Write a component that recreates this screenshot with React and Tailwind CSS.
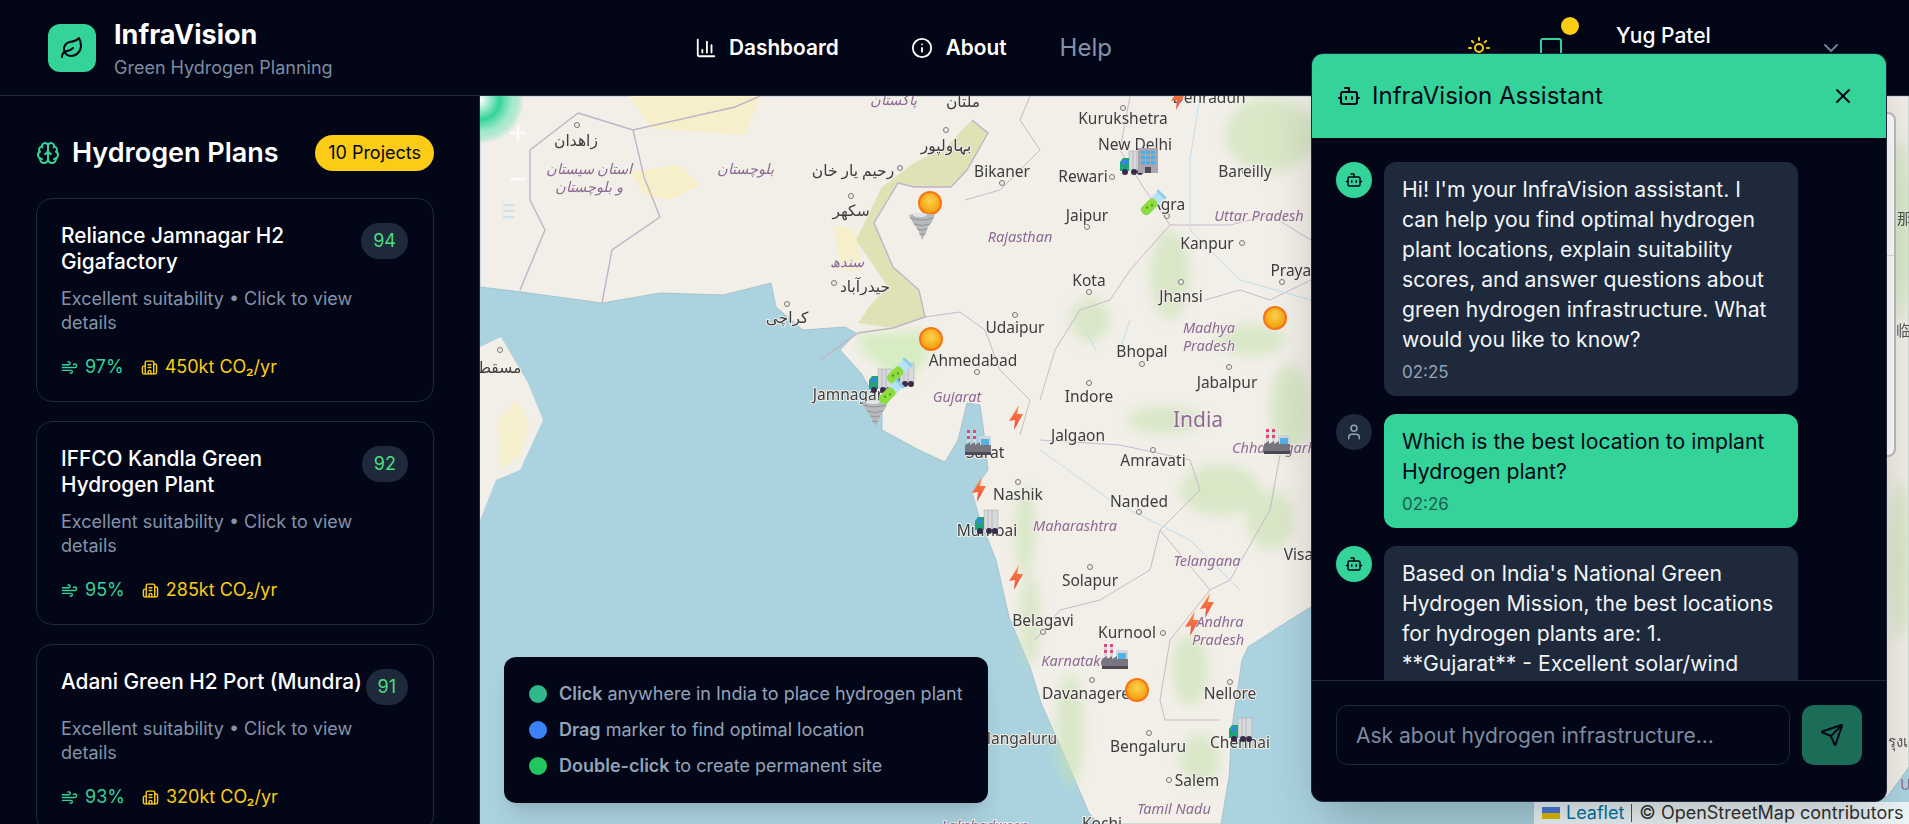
import {
  Bot,
  Brain,
  Building2,
  ChartColumn,
  ChevronDown,
  Info,
  Leaf,
  MessageSquare,
  Send,
  Sun,
  User,
  Wind,
  X,
} from "lucide-react";

const PLANS = [
  { name: "Reliance Jamnagar H2 Gigafactory", score: 94, wind: "97%", co2: "450kt" },
  { name: "IFFCO Kandla Green Hydrogen Plant", score: 92, wind: "95%", co2: "285kt" },
  { name: "Adani Green H2 Port (Mundra)", score: 91, wind: "93%", co2: "320kt" },
];

// [text, x, y] in page coordinates, the svg viewBox starts at the map's corner
const CITY_LABELS = [
  ["Kurukshetra", 1123, 119], ["New Delhi", 1135, 145], ["Bareilly", 1245, 172], ["Bikaner", 1002, 172],
  ["Rewari", 1083, 177], ["Agra", 1168, 205], ["Jaipur", 1087, 216], ["Kanpur", 1207, 244],
  ["Prayagraj", 1305, 271], ["Kota", 1089, 281], ["Jhansi", 1181, 297], ["Udaipur", 1015, 328],
  ["Ahmedabad", 973, 361], ["Bhopal", 1142, 352], ["Jabalpur", 1227, 383], ["Indore", 1089, 397],
  ["Jamnagar", 848, 395], ["Jalgaon", 1078, 436], ["Surat", 985, 453], ["Amravati", 1153, 461],
  ["Nashik", 1018, 495], ["Nanded", 1139, 502], ["Mumbai", 987, 531], ["Visakhapatnam", 1340, 555],
  ["Solapur", 1090, 581], ["Belagavi", 1043, 621], ["Kurnool", 1127, 633], ["Davanagere", 1086, 694],
  ["Nellore", 1230, 694], ["Mangaluru", 1017, 739], ["Chennai", 1240, 743], ["Bengaluru", 1148, 747],
  ["Salem", 1197, 781], ["Kochi", 1102, 824], ["Dehradun", 1209, 98], ["ملتان", 963, 102],
  ["زاهدان", 576, 141], ["رحيم يار خان", 853, 171], ["بہاولپور", 946, 146], ["سکھر", 851, 211],
  ["حيدرآباد", 865, 287], ["كراچی", 787, 318], ["مسقط", 499, 368],
];

const REGION_LABELS = [
  ["Uttar Pradesh", 1259, 216], ["Rajasthan", 1020, 237], ["Madhya", 1209, 328], ["Pradesh", 1209, 346],
  ["Gujarat", 957, 397], ["Chhattisgarh", 1274, 448], ["Maharashtra", 1075, 526], ["Telangana", 1207, 561],
  ["Andhra", 1220, 622], ["Pradesh", 1218, 640], ["Karnataka", 1075, 661], ["Tamil Nadu", 1174, 809],
  ["Lakshadweep", 985, 826], ["پاکستان", 893, 100], ["استان سیستان", 589, 169], ["و بلوچستان", 589, 187],
  ["بلوچستان", 745, 169], ["سندھ", 847, 262],
];

const TOWN_DOTS = [
  [1123, 108], [1245, 172], [1002, 183], [1112, 177], [1167, 216], [1087, 227], [1242, 243], [1282, 282],
  [1089, 292], [1181, 282], [1015, 315], [977, 372], [1142, 364], [1229, 367], [1089, 383], [1153, 450],
  [1018, 482], [1139, 512], [1090, 567], [1043, 632], [1163, 633], [1092, 680], [1230, 682], [1149, 733],
  [1054, 739], [1169, 780], [577, 125], [900, 168], [946, 130], [851, 196], [834, 283], [787, 304], [500, 350],
];

const SUNS = [[930, 203], [931, 339], [1275, 318], [1137, 690]];
const BOLTS = [[1016, 417], [979, 489], [1016, 577], [1207, 605], [1192, 623], [1178, 97]];
const TORNADOS = [[922, 226], [875, 413]];
const FACTORIES = [[978, 443], [1277, 442], [1115, 657]];
const TRUCKS = [[1132, 163], [881, 381], [903, 375], [987, 522], [1241, 730]];
const TUBES = [[1152, 204], [898, 372], [890, 393]];

const SunMarker = ({ x, y }) => (
  <g transform={`translate(${x} ${y})`}>
    <circle r="12" fill="#f97316" />
    <circle r="10" fill="url(#sunFill)" />
  </g>
);

const BoltMarker = ({ x, y }) => (
  <path
    transform={`translate(${x} ${y})`}
    d="M3 -12 L-7 4 L-1 3 L-2 13 L7 -3 L1 -3 Z"
    fill="url(#boltFill)"
  />
);

const TornadoMarker = ({ x, y }) => (
  <g transform={`translate(${x} ${y})`}>
    <path d="M-13 -11 Q0 -15 13 -11 L10 -4 L6 1 L4 7 L0 14 L-2 8 L-5 2 L-9 -3 Z" fill="#b7babd" />
    <path d="M-12 -8 Q0 -4 11 -8 M-8 -2 Q0 1 8 -2 M-5 3 Q0 5 5 3 M-3 8 Q0 9 3 8" fill="none" stroke="#8e9296" strokeWidth="1" />
    <ellipse cx="-2" cy="-11" rx="7" ry="2" fill="#e3e4e5" />
  </g>
);

const FactoryMarker = ({ x, y }) => (
  <g transform={`translate(${x} ${y})`}>
    <path d="M-11 -13 h3 v15 h-3 Z M-5 -13 h3 v15 h-3 Z" fill="#d8d8dc" />
    <path d="M-11 -13 h3 v3 h-3 Z M-5 -13 h3 v3 h-3 Z M-11 -7 h3 v3 h-3 Z M-5 -7 h3 v3 h-3 Z" fill="#e0457b" />
    <rect x="1" y="-7" width="12" height="14" rx="1" fill="#d2d6dc" />
    <rect x="3" y="-4" width="8" height="8" fill="#4fb3e8" />
    <path d="M-13 12 V2 L-8 -1 V2 L-3 -1 V2 L2 -1 V2 L13 2 V12 Z" fill="#77757f" />
    <rect x="-13" y="9" width="26" height="3" fill="#4d4a55" />
  </g>
);

const TruckMarker = ({ x, y }) => (
  <g transform={`translate(${x} ${y})`}>
    <rect x="-3" y="-12" width="14" height="19" fill="#d7d9dc" stroke="#a3a7ab" strokeWidth="0.5" />
    <path d="M1 -12 V7 M5 -12 V7" stroke="#b6b9bd" strokeWidth="1" />
    <path d="M-12 8 V-1 L-9 -5 H-3 V8 Z" fill="#1fa37a" />
    <rect x="-10" y="-3" width="5" height="4" fill="#3b82f6" />
    <circle cx="-7" cy="9" r="3" fill="#3a2a4a" />
    <circle cx="2" cy="9" r="3" fill="#3a2a4a" />
    <circle cx="8" cy="9" r="3" fill="#3a2a4a" />
  </g>
);

const TubeMarker = ({ x, y }) => (
  <g transform={`translate(${x} ${y}) rotate(45)`}>
    <rect x="-5" y="-14" width="10" height="27" rx="4" fill="#b8e2f6" />
    <rect x="-6" y="-15" width="12" height="3" fill="#8fcdea" />
    <rect x="-5" y="-5" width="10" height="18" rx="4" fill="#8fdc3e" />
    <circle cx="1" cy="1" r="1.2" fill="#4d9a22" />
    <circle cx="-1" cy="6" r="1.2" fill="#4d9a22" />
  </g>
);

const BuildingMarker = ({ x, y }) => (
  <g transform={`translate(${x} ${y})`}>
    <rect x="-10" y="-13" width="20" height="25" fill="#a9a6b0" />
    <path
      d="M-7 -10 h4 v3 h-4 Z M-2 -10 h4 v3 h-4 Z M3 -10 h4 v3 h-4 Z M-7 -5 h4 v3 h-4 Z M-2 -5 h4 v3 h-4 Z M3 -5 h4 v3 h-4 Z M-7 0 h4 v3 h-4 Z M-2 0 h4 v3 h-4 Z M3 0 h4 v3 h-4 Z"
      fill="#3fb2ee"
    />
    <rect x="-3" y="6" width="6" height="6" fill="#4a4a55" />
  </g>
);

const MapCanvas = () => (
  <svg viewBox="480 96 1429 728" className="h-full w-full" preserveAspectRatio="none">
    <defs>
      <radialGradient id="sunFill" cx="50%" cy="40%" r="60%">
        <stop offset="0%" stopColor="#fcd34d" />
        <stop offset="100%" stopColor="#f59e0b" />
      </radialGradient>
      <linearGradient id="boltFill" x1="0" y1="0" x2="0" y2="1">
        <stop offset="0%" stopColor="#fb923c" />
        <stop offset="100%" stopColor="#ef4444" />
      </linearGradient>
      <radialGradient id="pulseFill">
        <stop offset="0%" stopColor="#ffffff" />
        <stop offset="45%" stopColor="#34d399" />
        <stop offset="75%" stopColor="#86e8c0" stopOpacity="0.7" />
        <stop offset="100%" stopColor="#34d399" stopOpacity="0" />
      </radialGradient>
      <filter id="soft" x="-30%" y="-30%" width="160%" height="160%">
        <feGaussianBlur stdDeviation="6" />
      </filter>
      <filter id="softer" x="-10%" y="-10%" width="120%" height="120%">
        <feGaussianBlur stdDeviation="0.5" />
      </filter>
    </defs>

    <rect x="480" y="96" width="1429" height="728" fill="#aad3df" />

    {/* Oman */}
    <path d="M480 347 L501 337 L528 383 L543 420 L520 470 L496 480 L480 520 Z" fill="#f2efe9" />
    <path d="M498 420 L516 400 L530 425 L520 455 L500 470 Z" fill="#f7f0cf" />

    {/* Mainland */}
    <path
      d="M480 96 L480 287 L522 292 L602 303 L660 293 L723 295 L771 283 L776 307 L803 330 L845 327 L856 333 L840 350
         L861 373 L882 410 L882 430 L919 450 L945 462 L958 440 L967 403 L980 405 L985 440 L988 470 L972 492
         L980 520 L996 560 L1009 617 L1030 667 L1041 703 L1062 750 L1089 813 L1099 824 L1221 824 L1229 777 L1232 727
         L1242 660 L1248 647 L1290 620 L1311 607 L1600 690 L1887 797 L1909 767 L1909 96 Z"
      fill="#f2efe9"
      stroke="#9fbcc8"
      strokeWidth="0.8"
    />

    {/* Forest and farm patches */}
    <g filter="url(#soft)" fill="#c9e2b2" opacity="0.6">
      <ellipse cx="1270" cy="135" rx="45" ry="38" />
      <ellipse cx="1170" cy="275" rx="20" ry="45" />
      <ellipse cx="1090" cy="320" rx="20" ry="22" />
      <ellipse cx="1250" cy="340" rx="34" ry="16" />
      <ellipse cx="1290" cy="410" rx="20" ry="46" />
      <ellipse cx="1165" cy="420" rx="38" ry="14" />
      <ellipse cx="1220" cy="490" rx="40" ry="26" />
      <ellipse cx="1270" cy="520" rx="24" ry="30" />
      <ellipse cx="1025" cy="530" rx="10" ry="46" />
      <ellipse cx="1030" cy="620" rx="10" ry="46" />
      <ellipse cx="1070" cy="730" rx="14" ry="56" />
      <ellipse cx="1190" cy="670" rx="18" ry="36" />
      <ellipse cx="1200" cy="760" rx="20" ry="26" />
      <ellipse cx="1900" cy="230" rx="12" ry="90" />
      <ellipse cx="1900" cy="560" rx="10" ry="80" />
    </g>
    <path d="M858 335 L925 330 L930 355 L905 385 L880 365 L860 350 Z" fill="#d6ecc2" filter="url(#soft)" />

    {/* Desert belts */}
    <path
      d="M972 120 L988 133 L967 170 L951 187 L914 187 L898 183 L874 223 L893 267 L919 290 L925 317 L893 328 L858 323
         L872 303 L888 287 L856 240 L882 187 L914 163 L946 147 Z"
      fill="#dfe2b5"
    />
    <path d="M630 172 L680 165 L700 185 L670 200 L645 195 Z M630 96 L760 96 L745 135 L650 128 Z" fill="#f7efc9" />
    <path d="M835 225 L855 230 L862 270 L840 270 Z" fill="#f7efc9" />

    {/* Borders */}
    <g fill="none" stroke="#c2b3c6" strokeWidth="1.4">
      <path d="M578 113 L633 130 L735 107 L760 96" />
      <path d="M578 113 L530 150 L530 200 L545 230 L520 290" />
      <path d="M633 130 L644 177 L660 217 L612 250 L602 303" />
      <path d="M972 120 L988 133 L967 170 L951 187 L914 187 L898 183 L874 223 L893 267 L919 290 L925 317 L893 328 L858 333 L820 360" />
      <path d="M925 317 L960 312 L985 330 L1000 370 L1030 400 L1020 435" strokeWidth="0.9" />
      <path d="M1030 96 L1020 120 L1040 150 L1000 190 L965 200" strokeWidth="0.9" />
      <path d="M1130 96 L1120 150 L1145 190 L1170 225 L1230 225 L1270 215 L1311 240" strokeWidth="0.9" />
      <path d="M1170 225 L1130 270 L1110 300 L1080 310 L1055 350 L1040 400" strokeWidth="0.9" />
      <path d="M1205 300 L1240 290 L1270 300 L1311 280" strokeWidth="0.9" />
      <path d="M1040 440 L1120 445 L1190 460 L1200 490 L1160 530 L1150 570 L1100 600 L1060 610 L1035 640" strokeWidth="0.9" />
      <path d="M1160 530 L1210 590 L1170 640 L1160 700 L1165 720 L1220 720" strokeWidth="0.9" />
      <path d="M1280 455 L1270 510 L1230 580 L1210 590" strokeWidth="0.9" />
    </g>
    <g fill="none" stroke="#c3deea" strokeWidth="1">
      <path d="M1200 96 L1190 160 L1190 230 L1240 280 L1311 300" />
      <path d="M1040 450 L1110 500 L1190 540 L1240 590" />
      <path d="M1130 320 L1120 350 M1085 330 L1096 350" />
      <path d="M503 205 H515 M503 211 H515 M503 217 H515" strokeWidth="1.5" />
    </g>

    {/* Town dots */}
    <g fill="#f2efe9" stroke="#777" strokeWidth="1">
      {TOWN_DOTS.map(([x, y]) => (
        <circle key={`${x}-${y}`} cx={x} cy={y} r="2.5" />
      ))}
    </g>

    {/* Labels */}
    <g
      fontFamily="'Noto Sans', 'DejaVu Sans', sans-serif"
      fontSize="15.5"
      textAnchor="middle"
      fill="#3d3d3d"
      stroke="#f2efe9"
      strokeWidth="2"
      paintOrder="stroke"
      filter="url(#softer)"
    >
      {CITY_LABELS.map(([label, x, y]) => (
        <text key={label} x={x} y={y + 5}>
          {label}
        </text>
      ))}
    </g>
    <g
      fontFamily="'Noto Sans', 'DejaVu Sans', sans-serif"
      fontSize="14.5"
      fontStyle="italic"
      textAnchor="middle"
      fill="#8d6a92"
      stroke="#f2efe9"
      strokeWidth="2"
      paintOrder="stroke"
      filter="url(#softer)"
    >
      {REGION_LABELS.map(([label, x, y]) => (
        <text key={`${label}-${x}`} x={x} y={y + 5}>
          {label}
        </text>
      ))}
      <text x="1198" y="427" fontSize="21" fontStyle="normal">
        India
      </text>
    </g>
    <g fontFamily="'Noto Sans CJK SC', sans-serif" fontSize="15" fill="#555" filter="url(#softer)">
      <text x="1897" y="224">那</text>
      <text x="1896" y="336">临</text>
      <text x="1888" y="747">รุงเ</text>
      <text x="1900" y="790" fill="#8d6a92">U</text>
    </g>

    {/* Site markers */}
    {SUNS.map(([x, y]) => <SunMarker key={`${x}-${y}`} x={x} y={y} />)}
    {BOLTS.map(([x, y]) => <BoltMarker key={`${x}-${y}`} x={x} y={y} />)}
    {TORNADOS.map(([x, y]) => <TornadoMarker key={`${x}-${y}`} x={x} y={y} />)}
    {FACTORIES.map(([x, y]) => <FactoryMarker key={`${x}-${y}`} x={x} y={y} />)}
    {TRUCKS.map(([x, y]) => <TruckMarker key={`${x}-${y}`} x={x} y={y} />)}
    {TUBES.map(([x, y]) => <TubeMarker key={`${x}-${y}`} x={x} y={y} />)}
    <BuildingMarker x={1148} y={161} />

    {/* Drag pulse and the washed out zoom buttons */}
    <circle cx="480" cy="100" r="44" fill="url(#pulseFill)" />
    <path d="M510 133 H526 M518 125 V141 M510 179 H526" stroke="#ffffff" strokeWidth="2.5" opacity="0.85" />
  </svg>
);

const PlanCard = ({ plan }) => (
  <div className="rounded-2xl border border-[#1e293b] pl-[24px] pr-[25px] pt-[24px] pb-[22px]">
    <div className="flex items-start justify-between">
      <h3 className="text-[20.8px] leading-[26px] font-medium text-white">{plan.name}</h3>
      <span className="shrink-0 rounded-full bg-[#1e293b] px-[12px] py-[6px] text-[18px] leading-[24px] text-[#4ade80]">
        {plan.score}
      </span>
    </div>
    <p className="mt-[12px] text-[18px] leading-[24px] text-[#8493a9]">
      Excellent suitability • Click to view details
    </p>
    <div className="mt-[20px] flex items-center gap-[17px] text-[18px] leading-[24px]">
      <span className="flex items-center gap-[7px] text-[#34d399]">
        <Wind size={17} strokeWidth={2} />
        {plan.wind}
      </span>
      <span className="flex items-center gap-[7px] text-[#facc15]">
        <Building2 size={17} strokeWidth={2} />
        {plan.co2} CO₂/yr
      </span>
    </div>
  </div>
);

const Sidebar = () => (
  <aside className="h-full w-[480px] shrink-0 overflow-hidden border-r border-[#1e293b] pl-[36px] pr-[45px] pt-[39px]">
    <div className="flex h-[36px] items-center justify-between">
      <h2 className="flex items-center gap-[12px] text-[27px] font-semibold text-white">
        <Brain size={24} className="text-[#34d399]" />
        Hydrogen Plans
      </h2>
      <span className="rounded-full bg-[#facc15] px-[13px] py-[6px] text-[18px] leading-[24px] text-[#020617]">
        10 Projects
      </span>
    </div>
    <div className="mt-[27px] flex flex-col gap-[19px]">
      {PLANS.map((plan) => (
        <PlanCard key={plan.name} plan={plan} />
      ))}
    </div>
  </aside>
);

const Header = () => (
  <header className="flex h-[96px] shrink-0 items-center border-b border-[#1e293b] pl-[48px]">
    <div className="flex w-[647px] shrink-0 items-center gap-[18px]">
      <div className="flex h-[48px] w-[48px] items-center justify-center rounded-xl bg-[#34d399]">
        <Leaf size={24} className="text-[#020617]" />
      </div>
      <div className="mt-[3px]">
        <div className="text-[27px] leading-[34px] font-bold text-white">InfraVision</div>
        <div className="mt-[4px] text-[18px] leading-[24px] text-[#7d8ba1]">Green Hydrogen Planning</div>
      </div>
    </div>
    <nav className="flex w-[772px] shrink-0 items-center text-[20.8px]">
      <a className="flex items-center gap-[12px] font-semibold text-white">
        <ChartColumn size={22} />
        Dashboard
      </a>
      <a className="ml-[72px] flex items-center gap-[13px] font-semibold text-white">
        <Info size={22} />
        About
      </a>
      <a className="ml-[53px] text-[24px] text-[#8493a9]">Help</a>
    </nav>
    <div className="flex items-center">
      <Sun size={24} className="text-[#facc15]" />
      <div className="relative ml-[48px]">
        <MessageSquare size={24} className="text-[#34d399]" />
        <span className="absolute -right-[16px] -top-[19px] h-[18px] w-[18px] rounded-full bg-[#facc15]" />
      </div>
      <div className="ml-[53px] -mt-[24px] w-[203px] text-[21px] leading-[26px] font-medium text-white">Yug Patel</div>
      <ChevronDown size={24} className="text-[#718199]" />
    </div>
  </header>
);

const Avatar = ({ bot }) => (
  <div
    className={`flex h-[36px] w-[36px] shrink-0 items-center justify-center rounded-full ${
      bot ? "bg-[#34d399] text-[#020617]" : "bg-[#1e293b] text-[#94a3b8]"
    }`}
  >
    {bot ? <Bot size={18} /> : <User size={18} />}
  </div>
);

const Message = ({ bot, time, children }) => (
  <div className="flex gap-[12px]">
    <Avatar bot={bot} />
    <div
      className={`w-[414px] shrink-0 rounded-xl px-[18px] pt-[12px] pb-[11px] text-[21.2px] leading-[30px] ${
        bot ? "bg-[#1e293b] text-[#f1f5f9]" : "bg-[#34d399] text-[#020617]"
      }`}
    >
      <p>{children}</p>
      {time && (
        <div className={`mt-[5px] text-[17px] leading-[26px] ${bot ? "text-[#94a3b8]" : "text-[#1f5f4f]"}`}>{time}</div>
      )}
    </div>
  </div>
);

const ChatPanel = () => (
  <section className="absolute left-[1311px] top-[53px] flex h-[749px] w-[576px] flex-col overflow-hidden rounded-xl border border-[#1e293b] bg-[#020617] shadow-2xl">
    <div className="flex h-[84px] shrink-0 items-center justify-between bg-[#34d399] pl-[25px] pr-[31px] text-[#020617]">
      <div className="flex items-center gap-[11px] text-[24px]">
        <Bot size={24} />
        InfraVision Assistant
      </div>
      <X size={24} />
    </div>
    <div className="flex min-h-0 flex-1 flex-col gap-[18px] overflow-hidden px-[24px] pt-[24px]">
      <Message bot time="02:25">
        Hi! I'm your InfraVision assistant. I can help you find optimal hydrogen plant locations, explain suitability
        scores, and answer questions about green hydrogen infrastructure. What would you like to know?
      </Message>
      <Message time="02:26">Which is the best location to implant Hydrogen plant?</Message>
      <Message bot>
        Based on India's National Green Hydrogen Mission, the best locations for hydrogen plants are: 1. **Gujarat** -
        Excellent solar/wind resources and major ports. 2. **Rajasthan** - Highest solar irradiance in the country.
      </Message>
    </div>
    <div className="flex shrink-0 items-center gap-[12px] border-t border-[#1e293b] px-[24px] pt-[24px] pb-[36px]">
      <input
        className="h-[60px] w-[454px] rounded-xl border border-[#1e293b] bg-transparent px-[19px] text-[21px] outline-none placeholder:text-[#7d8ba1]"
        placeholder="Ask about hydrogen infrastructure..."
      />
      <button className="flex h-[60px] w-[60px] items-center justify-center rounded-xl bg-[#1b6d58] text-[#020617]">
        <Send size={24} />
      </button>
    </div>
  </section>
);

const Legend = () => (
  <div className="absolute bottom-[21px] left-[24px] flex h-[146px] w-[484px] flex-col justify-center gap-[12px] rounded-xl bg-[#020617] pl-[25px] text-[18px] leading-[24px] text-[#94a3b8] shadow-xl">
    <div className="flex items-center gap-[12px]">
      <span className="h-[18px] w-[18px] rounded-full bg-[#2fb98a]" />
      <span>
        <b className="font-semibold">Click</b> anywhere in India to place hydrogen plant
      </span>
    </div>
    <div className="flex items-center gap-[12px]">
      <span className="h-[18px] w-[18px] rounded-full bg-[#3b82f6]" />
      <span>
        <b className="font-semibold">Drag</b> marker to find optimal location
      </span>
    </div>
    <div className="flex items-center gap-[12px]">
      <span className="h-[18px] w-[18px] rounded-full bg-[#22c55e]" />
      <span>
        <b className="font-semibold">Double-click</b> to create permanent site
      </span>
    </div>
  </div>
);

const Attribution = () => (
  <div className="absolute bottom-0 right-0 flex h-[22px] w-[375px] items-center bg-white/80 pl-[8px] text-[18px] leading-[22px] text-[#333]">
    <svg viewBox="0 0 18 12" className="mr-[6px] h-[12px] w-[18px]">
      <rect width="18" height="6" fill="#4c7be1" />
      <rect y="6" width="18" height="6" fill="#e0bc00" />
    </svg>
    <span className="text-[#0078a8]">Leaflet</span>
    <span className="mx-[7px] h-[18px] w-px bg-[#555]" />
    <span>© OpenStreetMap contributors</span>
  </div>
);

export default function App() {
  return (
    <div className="relative flex h-[824px] w-[1909px] flex-col overflow-hidden bg-[#020617] font-['Inter',sans-serif]">
      <Header />
      <div className="flex min-h-0 flex-1">
        <Sidebar />
        <main className="relative min-w-0 flex-1 overflow-hidden">
          <MapCanvas />
          {/* Layers panel, mostly covered by the chat */}
          <div className="absolute right-[13px] top-[16px] h-[345px] w-[60px] rounded-lg border-2 border-[#bdbdbd] bg-white">
            <div className="mt-[141px] h-px w-full bg-[#ddd]" />
          </div>
          <Legend />
          <Attribution />
        </main>
      </div>
      <ChatPanel />
    </div>
  );
}
